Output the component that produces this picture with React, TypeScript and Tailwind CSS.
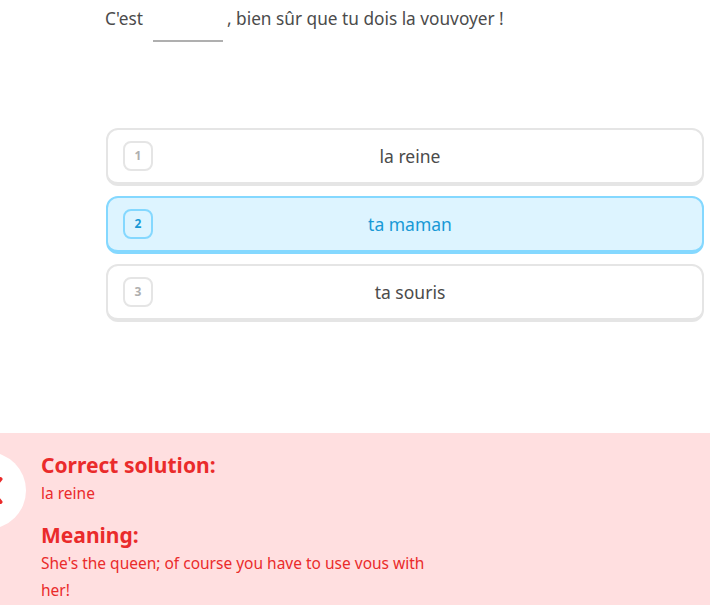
import React from 'react';

const choices = [
    { key: '1', label: 'la reine', selected: false },
    { key: '2', label: 'ta maman', selected: true },
    { key: '3', label: 'ta souris', selected: false },
];

const ChoiceCard: React.FC<{ num: string; label: string; selected: boolean }> = ({ num, label, selected }) => (
    <div
        className={`flex items-center h-[58px] rounded-xl border-2 border-b-4 px-[15px] ${
            selected ? 'bg-[#ddf4ff] border-[#84d8ff]' : 'bg-white border-[#e5e5e5]'
        }`}
    >
        <span
            className={`flex items-center justify-center w-[30px] h-[30px] rounded-lg border-2 text-[12px] font-bold ${
                selected ? 'border-[#84d8ff] text-[#1899d6]' : 'border-[#e5e5e5] text-[#afafaf]'
            }`}
        >
            {num}
        </span>
        <span className={`flex-1 text-center text-[17.5px] pl-[10px] ${selected ? 'text-[#1899d6]' : 'text-[#4b4b4b]'}`}>
            {label}
        </span>
        <span className="w-[30px]" />
    </div>
);

export default function App() {
    return (
        <div className="relative w-[710px] h-[605px] bg-white overflow-hidden font-['Noto_Sans',sans-serif]">
            <div className="pl-[105px] pt-[9px] flex items-end text-[17.25px] text-[#4b4b4b] h-[42px]">
                <span className="pb-[10px]">C'est</span>
                <span className="w-[70px] h-[2px] bg-[#afafaf] ml-[10px] mr-[4px]" />
                <span className="pb-[10px]">, bien sûr que tu dois la vouvoyer !</span>
            </div>

            <div className="ml-[106px] mr-[6px] mt-[86px] flex flex-col gap-[10px]">
                {choices.map(c => (
                    <ChoiceCard key={c.key} num={c.key} label={c.label} selected={c.selected} />
                ))}
            </div>

            <div className="absolute left-0 right-0 top-[433px] bottom-0 bg-[#ffdfe0]">
                {/* result badge, mostly cut off by the left edge */}
                <div className="absolute left-[-51px] top-[19px] w-[77px] h-[77px] rounded-full bg-white">
                    <svg width="77" height="77" viewBox="0 0 77 77" className="absolute left-0 top-0">
                        <path d="M33 27 L51.5 50 M51.5 27 L33 50" stroke="#ea2b2b" strokeWidth="4" strokeLinecap="round" />
                    </svg>
                </div>
                <div className="pl-[41px] pt-[19px] text-[#ea2b2b] w-[450px]">
                    <div className="text-[21px] font-bold leading-[26px]">Correct solution:</div>
                    <div className="text-[15.5px] leading-[26px] mt-[2px]">la reine</div>
                    <div className="text-[21px] font-bold leading-[26px] mt-[16px]">Meaning:</div>
                    <div className="text-[15.5px] leading-[27px] mt-[2px]">She's the queen; of course you have to use vous with her!</div>
                </div>
            </div>
        </div>
    );
}
